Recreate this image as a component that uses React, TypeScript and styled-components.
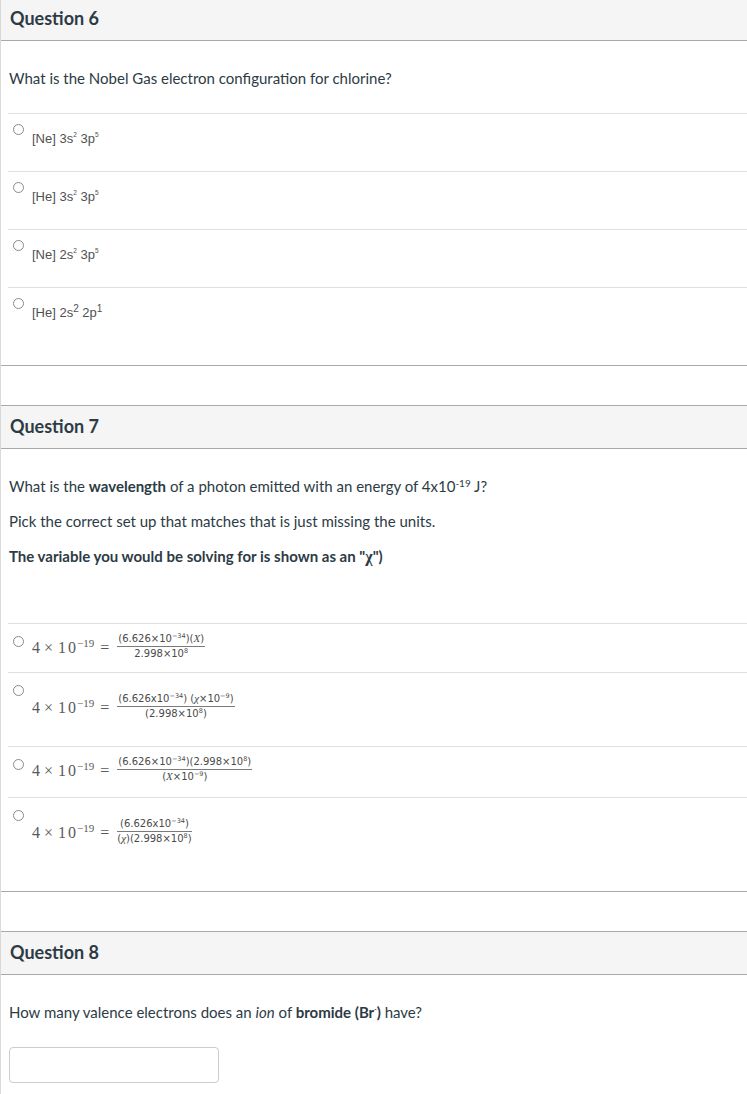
import React from "react";
import styled, { createGlobalStyle } from "styled-components";

const Global = createGlobalStyle`
  html, body { margin: 0; padding: 0; background: #fff; }
  body { font-family: Lato, "Open Sans", sans-serif; color: #2d3b45; }
  * { box-sizing: border-box; }
`;

const Page = styled.div`
  margin-top: -3px;
  border-left: 1px solid #d9d9d9;
  min-height: 1120px;
`;

const Card = styled.section<{ $last?: boolean }>`
  border-bottom: ${(p) => (p.$last ? "none" : "1px solid #a9a9a9")};
  margin-bottom: 39px;
`;

const Header = styled.header`
  background: #f5f5f5;
  border-top: 1px solid #a9a9a9;
  border-bottom: 1px solid #a9a9a9;
  padding: 7px 9px 9px;
`;

const Title = styled.h2`
  margin: 0;
  font: 700 18px/26px Lato, sans-serif;
  color: #2d3b45;
`;

const Body = styled.div`
  padding: 27px 0 20px;
`;

const Prompt = styled.div<{ $spacious?: boolean }>`
  padding: 0 8px;
  margin-bottom: ${(p) => (p.$spacious ? 57 : 25)}px;
  font-size: 15px;
  line-height: 20px;
  color: #2d3b45;
  p {
    margin: 0 0 15px;
    height: 20px;
  }
  p:last-child {
    margin-bottom: 0;
  }
`;

const Sup = styled.sup<{ $big?: boolean }>`
  font-size: ${(p) => (p.$big ? 10 : 6.5)}px;
  line-height: 0;
  vertical-align: ${(p) => (p.$big ? 5 : 6)}px;
`;

const Chi = styled.span`
  font-family: "Liberation Serif", serif;
  font-size: 16px;
  line-height: 0;
`;

const AnswerList = styled.div`
  margin-left: 7px;
`;

const Answer = styled.div`
  display: flex;
  align-items: flex-start;
  border-top: 1px solid #e0e0e0;
  padding-left: 5px;
`;

const Radio = styled.span<{ $math?: boolean }>`
  flex-shrink: 0;
  width: 11px;
  height: 11px;
  margin-top: ${(p) => (p.$math ? 12 : 10)}px;
  border: 1px solid #8a8a8a;
  border-radius: 50%;
  background: #fff;
`;

const Label = styled.span`
  margin-left: 8px;
  padding: 17px 0 24px;
  font: 13px/16px "Liberation Sans", Arial, sans-serif;
  color: #505050;
  white-space: nowrap;
`;

const Formula = styled.div<{ $wrapped?: boolean; $extra: number }>`
  display: flex;
  align-items: center;
  margin-left: 8px;
  padding-top: ${(p) => (p.$wrapped ? 20 : 9)}px;
  padding-bottom: ${(p) => (p.$wrapped ? 26 : 12) + p.$extra}px;
  color: #5a5a5a;
  white-space: nowrap;
`;

const Lhs = styled.span`
  display: inline-block;
  padding-top: 3px;
  font: 16px/16px "Liberation Serif", serif;
`;

const Op = styled.span`
  margin: 0 5px 0 4px;
`;

const Ten = styled.span`
  letter-spacing: 2px;
`;

const Exp = styled.span`
  font-size: 11px;
  line-height: 0;
  vertical-align: 6px;
  margin-left: -1px;
`;

const Rel = styled.span`
  margin: 0 7px 0 6px;
  letter-spacing: 1px;
`;

const Frac = styled.span`
  display: inline-flex;
  flex-direction: column;
  align-items: center;
  font: 10px/12px "DejaVu Sans", sans-serif;
  color: #4a4a4a;
`;

const Num = styled.span`
  height: 13px;
  padding: 0 1px 1px;
`;

const Den = styled.span`
  align-self: stretch;
  height: 14px;
  text-align: center;
  padding-top: 1px;
  border-top: 1px solid #7a7a7a;
`;

const S = styled.sup`
  font-size: 6.5px;
  line-height: 0;
  vertical-align: 4px;
`;

const V = styled.i`
  font-family: "Liberation Serif", serif;
  font-style: italic;
  font-size: 11px;
  line-height: 0;
`;

const TextInput = styled.input`
  display: block;
  margin-left: 8px;
  width: 210px;
  height: 36px;
  border: 1px solid #c7cdd1;
  border-radius: 4px;
  background: #fff;
`;

const q6 = [
  { base: ["[Ne] 3s", " 3p"], sups: ["2", "5"], big: false },
  { base: ["[He] 3s", " 3p"], sups: ["2", "5"], big: false },
  { base: ["[Ne] 2s", " 3p"], sups: ["2", "5"], big: false },
  { base: ["[He] 2s", " 2p"], sups: ["2", "1"], big: true },
];

const q7: { wrapped: boolean; extra: number; num: React.ReactNode; den: React.ReactNode }[] = [
  {
    wrapped: false,
    extra: 0,
    num: (
      <>
        (6.626×10<S>−34</S>)(<V>X</V>)
      </>
    ),
    den: (
      <>
        2.998×10<S>8</S>
      </>
    ),
  },
  {
    wrapped: true,
    extra: 0,
    num: (
      <>
        (6.626x10<S>−34</S>) (<V>χ</V>×10<S>−9</S>)
      </>
    ),
    den: (
      <>
        (2.998×10<S>8</S>)
      </>
    ),
  },
  {
    wrapped: false,
    extra: 2,
    num: (
      <>
        (6.626×10<S>−34</S>)(2.998×10<S>8</S>)
      </>
    ),
    den: (
      <>
        (<V>X</V>×10<S>−9</S>)
      </>
    ),
  },
  {
    wrapped: true,
    extra: 0,
    num: (
      <>
        (6.626x10<S>−34</S>)
      </>
    ),
    den: (
      <>
        (<V>χ</V>)(2.998×10<S>8</S>)
      </>
    ),
  },
];

export default function App() {
  return (
    <>
      <Global />
      <Page>
        <Card>
          <Header>
            <Title>Question 6</Title>
          </Header>
          <Body>
            <Prompt>
              <p>What is the Nobel Gas electron configuration for chlorine?</p>
            </Prompt>
            <AnswerList>
              {q6.map((a, i) => (
                <Answer key={i}>
                  <Radio />
                  <Label>
                    {a.base[0]}
                    <Sup $big={a.big}>{a.sups[0]}</Sup>
                    {a.base[1]}
                    <Sup $big={a.big}>{a.sups[1]}</Sup>
                  </Label>
                </Answer>
              ))}
            </AnswerList>
          </Body>
        </Card>

        <Card>
          <Header>
            <Title>Question 7</Title>
          </Header>
          <Body>
            <Prompt $spacious>
              <p>
                What is the <b>wavelength</b> of a photon emitted with an energy of 4x10
                <Sup $big>-19</Sup> J?
              </p>
              <p>Pick the correct set up that matches that is just missing the units.</p>
              <p>
                <b>
                  The variable you would be solving for is shown as an "<Chi>χ</Chi>")
                </b>
              </p>
            </Prompt>
            <AnswerList>
              {q7.map((a, i) => (
                <Answer key={i}>
                  <Radio $math />
                  <Formula $wrapped={a.wrapped} $extra={a.extra}>
                    <Lhs>
                      <span>4</span>
                      <Op>×</Op>
                      <Ten>10</Ten>
                      <Exp>−19</Exp>
                      <Rel>=</Rel>
                    </Lhs>
                    <Frac>
                      <Num>{a.num}</Num>
                      <Den>{a.den}</Den>
                    </Frac>
                  </Formula>
                </Answer>
              ))}
            </AnswerList>
          </Body>
        </Card>

        <Card $last>
          <Header>
            <Title>Question 8</Title>
          </Header>
          <Body>
            <Prompt>
              <p>
                How many valence electrons does an <i>ion</i> of{" "}
                <b>
                  bromide (Br<Sup>-</Sup>)
                </b>{" "}
                have?
              </p>
            </Prompt>
            <TextInput type="text" aria-label="answer" />
          </Body>
        </Card>
      </Page>
    </>
  );
}
